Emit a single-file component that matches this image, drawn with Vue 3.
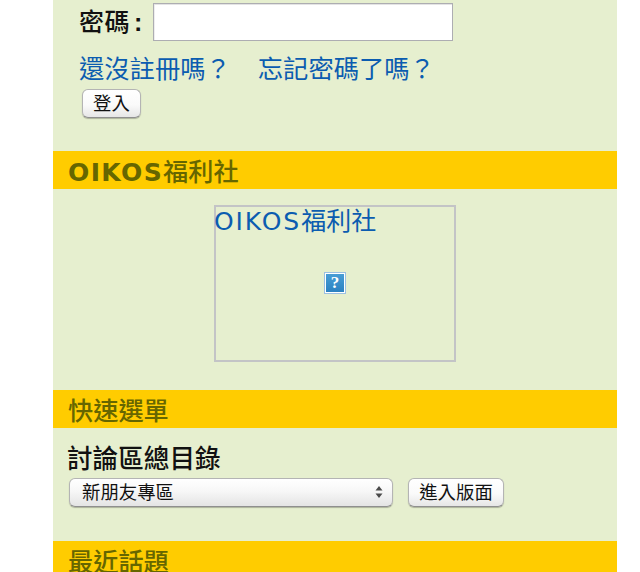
<script setup>
const boards = ['新朋友專區']
</script>

<template>
  <div class="page">
    <main class="column">
      <form class="login" @submit.prevent>
        <div class="password-row">
          <label class="field-label" for="pw">密碼<span class="colon">:</span></label>
          <input id="pw" class="text-input" type="text" />
        </div>
        <div class="links">
          <a href="#">還沒註冊嗎？</a>
          <a href="#">忘記密碼了嗎？</a>
        </div>
        <button class="btn login-btn" type="button">登入</button>
      </form>

      <h2 class="band"><span class="latin">OIKOS</span>福利社</h2>
      <section class="shop">
        <div class="frame">
          <a class="frame-title" href="#"><span class="frame-latin">OIKOS</span>福利社</a>
          <span class="broken"><span class="broken-q">?</span></span>
        </div>
      </section>

      <h2 class="band">快速選單</h2>
      <section class="quick">
        <h3 class="quick-title">討論區總目錄</h3>
        <div class="quick-row">
          <div class="select-wrap">
            <select class="select">
              <option v-for="b in boards" :key="b">{{ b }}</option>
            </select>
            <svg class="arrows" width="8" height="14" viewBox="0 0 8 14">
              <path d="M4 1 L7.5 5.5 H0.5 Z M4 13 L0.5 8.5 H7.5 Z" fill="#4a4a4a" />
            </svg>
          </div>
          <button class="btn enter-btn" type="button">進入版面</button>
        </div>
      </section>

      <h2 class="band">最近話題</h2>
    </main>
  </div>
</template>

<style>
html, body { margin: 0; background: #fff; overflow: hidden; }
</style>

<style scoped>
.page {
  width: 640px;
  height: 572px;
  overflow: hidden;
  background: #fff;
  font-family: "Liberation Sans", "Noto Sans CJK TC", sans-serif;
}
.column {
  width: 564px;
  margin-left: 53px;
  background: #e6efcf;
}
.login {
  display: flex;
  flex-direction: column;
  align-items: flex-start;
  padding: 3px 0 33px 26px;
}
.password-row {
  display: flex;
  align-items: center;
}
.field-label {
  width: 74px;
  font-size: 25px;
  font-weight: 500;
  letter-spacing: 0.5px;
  line-height: 38px;
  color: #111;
}
.colon {
  margin-left: 4px;
  font-weight: 700;
}
.text-input {
  box-sizing: border-box;
  width: 300px;
  height: 38px;
  padding: 0 4px;
  border: 1px solid #adadb2;
  border-radius: 0;
  background: #fff;
  box-shadow: inset 0 1px 0 #e4e4e4, inset 1px 0 0 #eeeeee;
  outline: none;
}
.links {
  display: flex;
  gap: 27px;
  margin-top: 13px;
  font-size: 25.3px;
  line-height: 30px;
}
.links a, .frame-title {
  color: #0b5cb0;
  text-decoration: none;
}
.btn {
  box-sizing: border-box;
  height: 29px;
  padding: 0;
  border: 1px solid #b4b4b4;
  border-bottom-color: #8f8f8f;
  border-radius: 6px;
  background: linear-gradient(#fff, #fafafa 55%, #e6e6e6);
  box-shadow: 0 1px 1px rgba(0, 0, 0, 0.25);
  font: inherit;
  font-size: 18.4px;
  line-height: 26px;
  color: #111;
}
.login-btn {
  width: 59px;
  margin: 5px 0 0 3px;
}
.band {
  height: 38px;
  margin: 0;
  padding-left: 15px;
  background: #ffcc00;
  color: #666600;
  font-size: 25.2px;
  font-weight: 500;
  line-height: 42px;
  overflow: hidden;
}
.latin {
  font-family: "DejaVu Sans", sans-serif;
  font-weight: 700;
  letter-spacing: 1.4px;
  font-size: 25px;
}
.shop {
  padding: 16px 0 28px;
}
.frame {
  display: grid;
  box-sizing: border-box;
  width: 242px;
  height: 157px;
  margin: 0 auto;
  border: 2px solid #c3c4c6;
}
.frame-title, .broken {
  grid-area: 1 / 1;
}
.frame-title {
  align-self: start;
  justify-self: start;
  margin-left: -2px;
  font-size: 25px;
  line-height: 28px;
}
.frame-latin {
  font-family: "DejaVu Sans", sans-serif;
  letter-spacing: 1.9px;
}
.broken {
  place-self: center;
  display: flex;
  align-items: center;
  justify-content: center;
  box-sizing: border-box;
  width: 22px;
  height: 22px;
  margin-top: -2px;
  border: 1px solid #9cc0e2;
  box-shadow: inset 0 0 0 1px #fff;
  background: linear-gradient(#4a9fd6, #2a80c0);
}
.broken-q {
  color: #fff;
  font-family: "Liberation Serif", serif;
  font-size: 17px;
  font-weight: 700;
  line-height: 1;
}
.quick {
  padding: 16px 0 34px 14px;
}
.quick-title {
  margin: 0;
  font-size: 25.6px;
  font-weight: 500;
  line-height: 30px;
  color: #111;
}
.quick-row {
  display: flex;
  gap: 15px;
  margin-top: 4px;
  margin-left: 2px;
}
.select-wrap {
  position: relative;
  width: 324px;
  height: 29px;
}
.select {
  appearance: none;
  box-sizing: border-box;
  width: 100%;
  height: 100%;
  padding: 0 24px 0 12px;
  border: 1px solid #b4b4b4;
  border-bottom-color: #8f8f8f;
  border-radius: 6px;
  background: linear-gradient(#fff, #f7f7f7 45%, #e4e4e4);
  box-shadow: 0 1px 1px rgba(0, 0, 0, 0.25);
  font: inherit;
  font-size: 18.4px;
  color: #111;
  outline: none;
}
.arrows {
  position: absolute;
  top: 7px;
  right: 10px;
  pointer-events: none;
}
.enter-btn {
  width: 96px;
}
</style>
